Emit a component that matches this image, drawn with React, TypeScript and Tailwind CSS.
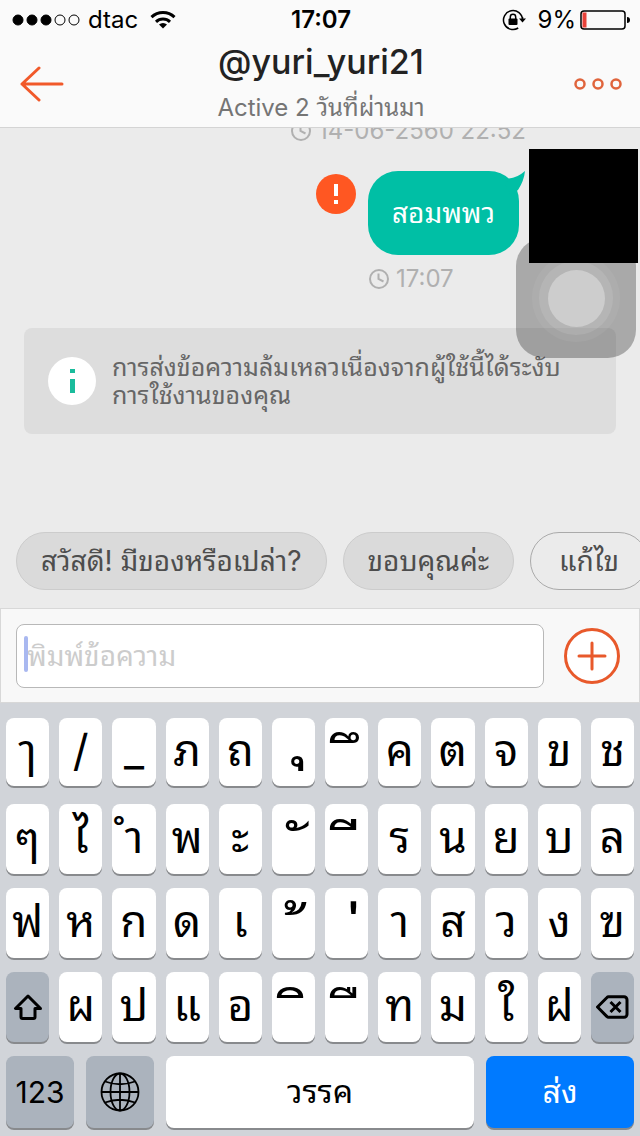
import { clsx } from 'clsx'

const QUICK_REPLIES = [
  { label: 'สวัสดี! มีของหรือเปล่า?', outlined: false },
  { label: 'ขอบคุณค่ะ', outlined: false },
  { label: 'แก้ไข', outlined: true },
]

// combining vowels and tone marks sit on an en space so they keep their place
const LOWER_MARK = '\u2002ุ'

const KEY_ROWS = [
  ['ๅ', '/', '_', 'ภ', 'ถ', LOWER_MARK, '\u2002ึ', 'ค', 'ต', 'จ', 'ข', 'ช'],
  ['ๆ', 'ไ', 'ำ', 'พ', 'ะ', '\u2002ั', '\u2002ี', 'ร', 'น', 'ย', 'บ', 'ล'],
  ['ฟ', 'ห', 'ก', 'ด', 'เ', '\u2002้', '\u2002่', 'า', 'ส', 'ว', 'ง', 'ฃ'],
  ['shift', 'ผ', 'ป', 'แ', 'อ', '\u2002ิ', '\u2002ื', 'ท', 'ม', 'ใ', 'ฝ', 'delete'],
]

function ClockIcon() {
  return (
    <svg viewBox="0 0 22 22" className="size-[22px] shrink-0" fill="none" stroke="currentColor" strokeWidth="2">
      <circle cx="11" cy="11" r="9" />
      <path d="M10.5 5.5V11l5 2.5" />
    </svg>
  )
}

function ShiftIcon() {
  return (
    <svg viewBox="0 0 30 28" className="h-7 w-[30px]" fill="none" stroke="black" strokeWidth="3" strokeLinejoin="round">
      <path d="M15 3 2.5 15.5H8V24a1.5 1.5 0 0 0 1.5 1.5h11A1.5 1.5 0 0 0 22 24v-8.5h5.5z" />
    </svg>
  )
}

function DeleteIcon() {
  return (
    <svg viewBox="0 0 34 26" className="h-[26px] w-[34px]" fill="none" stroke="black" strokeWidth="3" strokeLinejoin="round">
      <path d="M2.5 13 12 3.5a2 2 0 0 1 1.5-.7H29a3 3 0 0 1 3 3v14.5a3 3 0 0 1-3 3H13.5a2 2 0 0 1-1.5-.7z" />
      <path d="m15.5 8 10 10m0-10-10 10" />
    </svg>
  )
}

function GlobeIcon() {
  return (
    <svg viewBox="0 0 40 40" className="size-10" fill="none" stroke="black" strokeWidth="1.8">
      <circle cx="20" cy="20" r="18.5" />
      <ellipse cx="20" cy="20" rx="9.5" ry="18.5" />
      <path d="M20 1.5v37M1.5 20h37M5 9.5q15 5.5 30 0M5 30.5q15-5.5 30 0" />
    </svg>
  )
}

function StatusBar() {
  return (
    <div className="grid h-10 grid-cols-3 items-center pr-2.5 pl-3 text-2xl text-black">
      <div className="flex items-center">
        <svg viewBox="0 0 68 12" className="h-3 w-[68px]" stroke="black">
          <circle cx="6" cy="6" r="5" />
          <circle cx="20" cy="6" r="5" />
          <circle cx="34" cy="6" r="5" />
          <circle cx="48" cy="6" r="5" fill="none" />
          <circle cx="62" cy="6" r="5" fill="none" />
        </svg>
        <span className="ml-2">dtac</span>
        <svg viewBox="0 0 26 18" className="ml-3 h-[18px] w-[26px]" fill="none" stroke="black" strokeWidth="3">
          <path d="M1.5 6.2a16.5 16.5 0 0 1 23 0M6 10.8a10.3 10.3 0 0 1 14 0" />
          <path d="m13 17.5-4-4a6 6 0 0 1 8 0z" fill="black" stroke="none" />
        </svg>
      </div>
      <span className="text-center font-semibold">17:07</span>
      <div className="flex items-center justify-end">
        <svg viewBox="0 0 24 22" className="h-[22px] w-6" fill="none" stroke="black" strokeWidth="1.5">
          <path d="M20.5 11a9.5 9.5 0 1 0-4.3 8M20.5 8v3" />
          <path d="M17 9.5h7l-3.5 4z" fill="black" stroke="none" />
          <rect x="6.5" y="9.5" width="9" height="6.5" rx="1" fill="black" stroke="none" />
          <path d="M8.3 10V8a2.7 2.7 0 0 1 5.4 0v2" />
        </svg>
        <span className="ml-3">9%</span>
        <svg viewBox="0 0 50 20" className="ml-1 h-5 w-[50px]">
          <rect x="1" y="1" width="44" height="18" rx="3" fill="none" stroke="black" strokeWidth="1.5" />
          <rect x="2.5" y="2.5" width="4" height="15" fill="#e8423a" />
          <path d="M47 7q3 0 3 3t-3 3z" />
        </svg>
      </div>
    </div>
  )
}

function Header() {
  return (
    <header className="border-b border-[#d4d4d4] bg-[#fafafa]">
      <StatusBar />
      <div className="flex h-[87px] items-center justify-between px-4">
        <button type="button" aria-label="Back" className="p-1">
          <svg viewBox="0 0 44 36" className="h-9 w-11" fill="none" stroke="#f1592a" strokeWidth="3" strokeLinecap="round" strokeLinejoin="round">
            <path d="M42 18H2M19 2 2 18l17 16" />
          </svg>
        </button>
        <div className="text-center">
          <h1 className="text-[34px] leading-9 font-medium text-[#222]">@yuri_yuri21</h1>
          <p className="mt-3 text-2xl text-[#757575]">Active 2 วันที่ผ่านมา</p>
        </div>
        <button type="button" aria-label="More">
          <svg viewBox="0 0 50 14" className="h-3.5 w-[50px]" fill="none" stroke="#e0643c" strokeWidth="2.5">
            <circle cx="6" cy="7" r="4.5" />
            <circle cx="24" cy="7" r="4.5" />
            <circle cx="42" cy="7" r="4.5" />
          </svg>
        </button>
      </div>
    </header>
  )
}

function Message() {
  return (
    <div className="flex items-start justify-end pr-0.5">
      <svg viewBox="0 0 40 40" className="mt-[25px] mr-3 size-10">
        <circle cx="20" cy="20" r="20" fill="#ff5722" />
        <path d="M18 10h4v12h-4zM18 26h4v4h-4z" fill="#fff" />
      </svg>
      <div className="relative mt-[22px]">
        <p className="flex h-[84px] items-center rounded-[30px] bg-[#00bfa5] px-6 text-[28px] text-white">สอมพพว</p>
        <svg viewBox="0 0 20 24" className="absolute top-0 -right-1.5 h-6 w-5">
          <path d="M0 14 4 7.5Q12 7 20 0 19 10 13 19L6 24z" fill="#00bfa5" />
        </svg>
        <p className="mt-2 flex items-center gap-1.5 text-2xl text-[#b0b0b0]">
          <ClockIcon />
          17:07
        </p>
      </div>
      <div className="relative z-20 ml-2.5 h-[114px] w-[109px] bg-black" />
    </div>
  )
}

function AssistiveTouch() {
  return (
    <div className="absolute top-[110px] right-1 z-10 flex size-[120px] items-center justify-center rounded-[28px] bg-black/28">
      <div className="flex size-[88px] items-center justify-center rounded-full bg-white/5">
        <div className="flex size-[74px] items-center justify-center rounded-full bg-white/10">
          <div className="size-[57px] rounded-full bg-[#cdcdcd]" />
        </div>
      </div>
    </div>
  )
}

function Key({ value }: { value: string }) {
  const isAction = value === 'shift' || value === 'delete'
  const isMark = value.startsWith('\u2002')

  return (
    <button
      type="button"
      aria-label={isAction ? value : undefined}
      className={clsx(
        'flex min-w-0 items-center justify-center rounded-lg leading-none text-black shadow-[0_2px_0_#888a8d]',
        isAction ? 'bg-[#abb3bd]' : 'bg-white',
        isMark ? 'h-full text-[60px]' : 'text-[44px]',
        isMark && (value === LOWER_MARK ? 'pb-11' : 'pt-4'),
        !isAction && !isMark && 'pb-1',
      )}
    >
      {value === 'shift' ? <ShiftIcon /> : value === 'delete' ? <DeleteIcon /> : value}
    </button>
  )
}

function Keyboard() {
  return (
    <div className="flex flex-col gap-3.5 bg-[#d1d4d9] px-1.5 pt-[15px] pb-2">
      {KEY_ROWS.map((row, index) => (
        <div
          key={index}
          className={clsx('grid grid-cols-12 grid-rows-1 gap-2.5', index === 0 ? 'mb-1 h-[68px]' : 'h-[70px]')}
        >
          {row.map((value) => (
            <Key key={value} value={value} />
          ))}
        </div>
      ))}
      <div className="flex h-[72px] gap-3 text-[32px] leading-none text-black">
        <button type="button" className="w-[68px] rounded-lg bg-[#abb3bd] text-3xl shadow-[0_2px_0_#888a8d]">
          123
        </button>
        <button
          type="button"
          aria-label="Next keyboard"
          className="flex w-[68px] items-center justify-center rounded-lg bg-[#abb3bd] shadow-[0_2px_0_#888a8d]"
        >
          <GlobeIcon />
        </button>
        <button type="button" className="flex-1 rounded-lg bg-white shadow-[0_2px_0_#888a8d]">
          วรรค
        </button>
        <button type="button" className="w-[148px] rounded-lg bg-[#007aff] text-white shadow-[0_2px_0_#888a8d]">
          ส่ง
        </button>
      </div>
    </div>
  )
}

export default function App() {
  return (
    <div className="min-h-screen bg-[#d1d4d9] font-['Inter','Noto_Sans_Thai_Looped','Noto_Looped_Thai','Loma','Garuda','Waree','Umpush','FreeSerif','Norasi','Kinnari',sans-serif]">
      <Header />

      <main className="relative h-[480px] overflow-hidden bg-[#ebebeb]">
        <p className="-mt-4 flex h-[37px] items-center justify-end gap-1.5 pr-[114px] text-2xl text-[#b0b0b0]">
          <ClockIcon />
          14-06-2560 22:52
        </p>
        <Message />
        <AssistiveTouch />

        <section className="mx-6 mt-[33px] flex h-[106px] items-center gap-4 rounded-lg bg-[#ddd] px-6">
          <svg viewBox="0 0 48 48" className="size-12 shrink-0">
            <circle cx="24" cy="24" r="24" fill="#fff" />
            <path d="M22 12h5v4h-5zM22 22h5v14h-5z" fill="#1abc9c" />
          </svg>
          <p className="text-[25px] leading-7 text-[#666]">
            การส่งข้อความล้มเหลวเนื่องจากผู้ใช้นี้ได้ระงับ
            <br />
            การใช้งานของคุณ
          </p>
        </section>

        <div className="absolute bottom-[18px] left-4 flex gap-4">
          {QUICK_REPLIES.map(({ label, outlined }) => (
            <button
              key={label}
              type="button"
              className={clsx(
                'h-[58px] shrink-0 rounded-full border text-[28px] whitespace-nowrap text-[#4d4d4d]',
                outlined ? 'border-[#aaa] px-7' : 'border-[#ccc] bg-[#dadada] px-6',
              )}
            >
              {label}
            </button>
          ))}
        </div>
      </main>

      <form className="flex h-[95px] items-center gap-5 border border-[#d8d8d8] bg-[#f8f8f8] pr-[19px] pl-[15px]">
        <div className="relative flex-1">
          <input
            type="text"
            aria-label="ข้อความ"
            placeholder="พิมพ์ข้อความ"
            className="block h-16 w-full rounded-lg border border-[#b8b8b8] bg-white px-2.5 text-[28px] outline-none placeholder:text-[#ccc]"
          />
          <span className="absolute top-3 left-2 h-9 w-1 rounded-sm bg-[#a9b8f0]" />
        </div>
        <button type="button" aria-label="Add">
          <svg viewBox="0 0 56 56" className="size-14" fill="none" stroke="#e8592b" strokeWidth="3" strokeLinecap="round">
            <circle cx="28" cy="28" r="26.5" fill="#fff" />
            <path d="M28 15v26M15 28h26" />
          </svg>
        </button>
      </form>

      <Keyboard />
    </div>
  )
}
